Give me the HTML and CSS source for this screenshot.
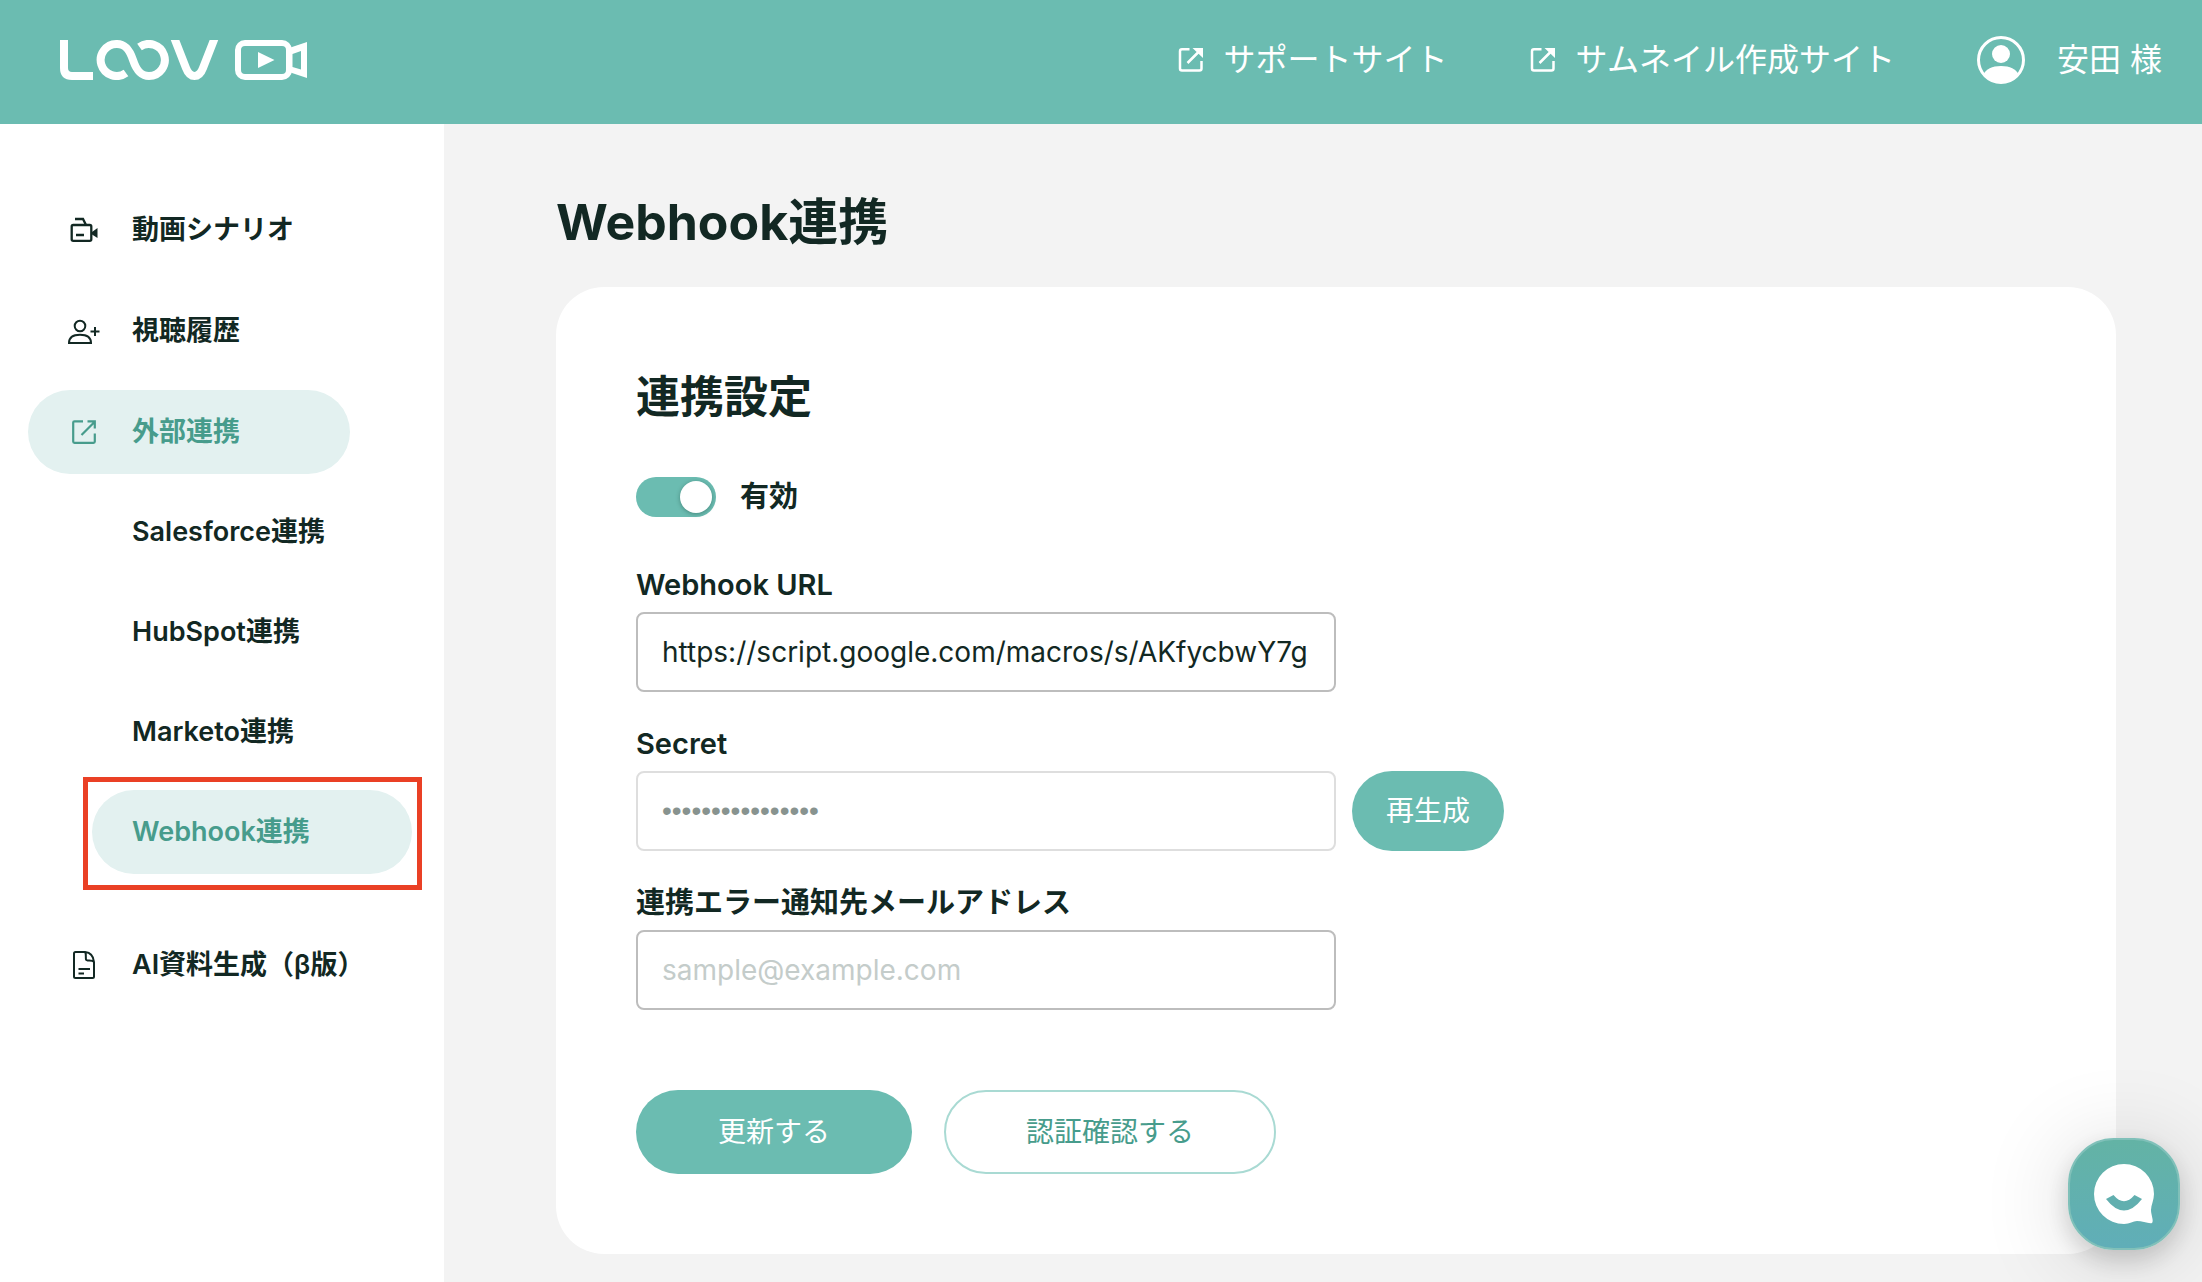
FILE: index.html
```html
<!DOCTYPE html>
<html lang="ja">
<head>
<meta charset="utf-8">
<meta name="viewport" content="width=device-width, initial-scale=1">
<title>Webhook連携 | LOOV</title>
<link rel="stylesheet" href="styles.css">
</head>
<body>
<header class="header">
  <a class="logo" href="#" aria-label="LOOV">
    <svg width="248" height="40" viewBox="60 40 248 40" fill="none" stroke="#fff" stroke-width="8">
      <path d="M64 36V68Q64 76 72 76H93"/>
      <path d="M126 73A16 16 0 1 1 117 44C126 44 130 51 133 60C136 69 140 76 149 76A16 16 0 1 0 139.500 47"/>
      <path d="M173.500 36L186 68Q189 76 194.500 76Q200 76 203 68L215.500 36"/>
      <rect x="238" y="43" width="51" height="34" rx="7" stroke-width="6"/>
      <path d="M258 52L274.500 60L258 68Z" fill="#fff" stroke="none"/>
      <path fill-rule="evenodd" d="M289 48L307 42V78L289 72ZM292.500 54V67L301 69.500V51Z" fill="#fff" stroke="none"/>
    </svg>
  </a>
  <nav class="header-nav">
    <a class="header-link" href="#">
      <svg class="header-icon" viewBox="0 0 26 26" fill="none" stroke="#fff" stroke-width="2.500"><path d="M11.500 2.300H4a2 2 0 0 0-2 2V21.500a2 2 0 0 0 2 2H21.500a2 2 0 0 0 2-2V14M9.500 16L21 4.500"/><path d="M14.500 1H25V11Z" fill="#fff" stroke="none"/></svg>
      <span>サポートサイト</span>
    </a>
    <a class="header-link" href="#">
      <svg class="header-icon" viewBox="0 0 26 26" fill="none" stroke="#fff" stroke-width="2.500"><path d="M11.500 2.300H4a2 2 0 0 0-2 2V21.500a2 2 0 0 0 2 2H21.500a2 2 0 0 0 2-2V14M9.500 16L21 4.500"/><path d="M14.500 1H25V11Z" fill="#fff" stroke="none"/></svg>
      <span>サムネイル作成サイト</span>
    </a>
    <a class="account" href="#">
      <svg width="48" height="48" viewBox="0 0 48 48"><circle cx="24" cy="24" r="22.500" fill="none" stroke="#fff" stroke-width="3"/><circle cx="24" cy="18" r="9" fill="#fff"/><path d="M6 39C9 33 15 30 24 30S39 33 42 39A24 24 0 0 1 6 39Z" fill="#fff"/></svg>
      <span>安田 様</span>
    </a>
  </nav>
</header>
<div class="layout">
  <nav class="sidebar">
    <ul class="menu">
      <li><a class="menu-item" href="#">
        <svg class="menu-icon" viewBox="0 0 32 32" fill="none" stroke="currentColor" stroke-width="2.300"><rect x="3.700" y="11" width="19.600" height="15.800" rx="1.500"/><path d="M7 5H15L18 11M8 21H16"/><path d="M24 18L29.500 14V24L24 20.500Z" fill="currentColor" stroke="none"/></svg>
        動画シナリオ</a></li>
      <li><a class="menu-item" href="#">
        <svg class="menu-icon" viewBox="0 0 32 32" fill="none" stroke="currentColor" stroke-width="2"><circle cx="12" cy="11" r="5.300"/><path d="M1 28C1 22 5 19.700 12 19.700S23 22 23 28ZM27 12V21M22.500 16.500H31.500"/></svg>
        視聴履歴</a></li>
      <li>
        <a class="menu-item menu-item-active" href="#">
          <svg class="menu-icon" viewBox="0 0 32 32" fill="none" stroke="currentColor" stroke-width="2.200"><path d="M15 5.300H6.500a1.300 1.300 0 0 0-1.300 1.300V25.600a1.300 1.300 0 0 0 1.300 1.300H25.500a1.300 1.300 0 0 0 1.300-1.300V17.500M13.500 19L26.500 6M19.500 5.300H26.800V12.600"/></svg>
          外部連携</a>
        <ul class="submenu">
          <li><a class="submenu-item" href="#">Salesforce連携</a></li>
          <li><a class="submenu-item" href="#">HubSpot連携</a></li>
          <li><a class="submenu-item" href="#">Marketo連携</a></li>
          <li class="submenu-marked"><a class="submenu-item menu-item-active" href="#">Webhook連携</a></li>
        </ul>
      </li>
      <li class="menu-last"><a class="menu-item" href="#">
        <svg class="menu-icon" viewBox="0 0 32 32" fill="none" stroke="currentColor" stroke-width="2"><path d="M7.500 3H17C22 3.500 25.500 7 26 13V27.500a1.500 1.500 0 0 1-1.500 1.500H7.500A1.500 1.500 0 0 1 6 27.500V4.500A1.500 1.500 0 0 1 7.500 3ZM17 3C18.500 5 17.500 8.500 18 10.500C18.500 12.500 24 10.500 26 13M10.500 20H22M10.500 24.500H16"/></svg>
        AI資料生成（β版）</a></li>
    </ul>
  </nav>
  <main class="main">
    <h1 class="page-title">Webhook連携</h1>
    <form class="card">
      <h2 class="card-title">連携設定</h2>
      <label class="toggle"><input class="toggle-input" type="checkbox" role="switch" checked>有効</label>
      <div class="field">
        <label class="label" for="url">Webhook URL</label>
        <input class="input" id="url" type="text" value="https://script.google.com/macros/s/AKfycbwY7g">
      </div>
      <div class="field">
        <label class="label" for="secret">Secret</label>
        <div class="field-row">
          <input class="input input-secret" id="secret" type="password" value="abcdefghijklmnop" disabled>
          <button class="button button-small" type="button">再生成</button>
        </div>
      </div>
      <div class="field">
        <label class="label" for="mail">連携エラー通知先メールアドレス</label>
        <input class="input" id="mail" type="email" placeholder="sample@example.com">
      </div>
      <div class="actions">
        <button class="button" type="button">更新する</button>
        <button class="button button-outline" type="button">認証確認する</button>
      </div>
    </form>
  </main>
</div>
<button class="chat" type="button" aria-label="チャット">
  <svg width="60" height="60" viewBox="0 0 60 60"><path d="M30 0A30 30 0 0 1 60 30C60 36 57 41 57 46C57 51 60 57 58 59C55 60 48 57 43 57C39 57 36 60 30 60A30 30 0 0 1 30 0Z" fill="#fff"/><path d="M12 35L19.500 31Q30 43.500 40.500 31L48 35Q30 58 12 35Z" fill="#61afaf"/></svg>
</button>
</body>
</html>
```
FILE: styles.css
```css
* { box-sizing: border-box; }

body {
  margin: 0;
  min-height: 100vh;
  display: flex;
  flex-direction: column;
  background: #f3f3f3;
  color: #122823;
  font-family: Inter, "Noto Sans CJK JP", sans-serif;
  font-size: 28px;
  line-height: 42px;
}

h1, h2, ul { margin: 0; padding: 0; }
ul { list-style: none; }
a { color: inherit; text-decoration: none; }
svg { display: block; flex: none; }
button, input { font: inherit; color: inherit; }

.header {
  height: 124px;
  padding: 0 40px 4px 60px;
  display: flex;
  align-items: center;
  justify-content: space-between;
  background: #6bbcb1;
  color: #fff;
  font-size: 32px;
  white-space: nowrap;
}
.header-nav { display: flex; align-items: center; gap: 82px; }
.header-link { display: flex; align-items: center; gap: 20px; }
.header-icon { width: 26px; height: 26px; }
.account { display: flex; align-items: center; gap: 32px; }

.layout { flex: 1; display: flex; }

.sidebar {
  flex: none;
  width: 444px;
  padding: 64px 28px 40px;
  background: #fff;
  font-size: 27px;
  font-weight: 600;
  white-space: nowrap;
}
.menu { display: flex; flex-direction: column; gap: 17px; }
.menu-item, .submenu-item {
  display: flex;
  align-items: center;
  height: 84px;
  padding-left: 40px;
  border-radius: 42px;
}
.menu-item { width: 322px; gap: 32px; }
.menu-icon { width: 32px; height: 32px; }
.menu-item-active { background: #e3f1f0; color: #479c8c; }
.menu-last { margin-top: 32px; }
.submenu {
  display: flex;
  flex-direction: column;
  gap: 16px;
  margin: 16px 0 0 64px;
}
.submenu-item { width: 320px; }
.submenu-marked { position: relative; }
.submenu-marked::after {
  content: "";
  position: absolute;
  inset: -13px -10px -16px -9px;
  border: 5px solid #ea4025;
  pointer-events: none;
}
.submenu-marked { width: 320px; }

.main { flex: 1; min-width: 0; padding: 62px 86px 28px 112px; }
.page-title {
  margin-bottom: 29px;
  font-size: 50px;
  line-height: 72px;
  font-weight: 700;
}
.card { padding: 80px; border-radius: 48px; background: #fff; }
.card-title { margin-bottom: 50px; font-size: 44px; line-height: 60px; font-weight: 700; }

.toggle {
  display: flex;
  align-items: center;
  gap: 24px;
  height: 40px;
  margin-bottom: 47px;
  font-size: 29px;
  font-weight: 600;
}
.toggle-input {
  appearance: none;
  display: flex;
  justify-content: flex-end;
  width: 80px;
  height: 40px;
  margin: 0;
  padding: 4px;
  border-radius: 20px;
  background: #6bbcb1;
}
.toggle-input::before {
  content: "";
  width: 32px;
  height: 32px;
  border-radius: 50%;
  background: #fff;
  box-shadow: 0 1px 4px rgba(0, 40, 30, .35);
}
.toggle-input:not(:checked) { justify-content: flex-start; background: #bdbdbd; }

.field { display: flex; flex-direction: column; gap: 6px; margin-bottom: 31px; }
.field-row { display: flex; gap: 16px; }
.label { font-size: 29px; font-weight: 600; }
.input {
  width: 700px;
  max-width: 100%;
  height: 80px;
  padding: 0 24px;
  border: 2px solid #bdbdbd;
  border-radius: 8px;
  background: #fff;
}
.input::placeholder { color: #c4ccca; opacity: 1; }
.input-secret { border-color: #dedede; color: #88938f; font-family: "Liberation Sans", sans-serif; }

.actions { display: flex; gap: 32px; margin-top: 80px; }
.actions .button { height: 84px; }
.button {
  padding: 0 82px;
  border: 0;
  border-radius: 42px;
  background: #6bbcb1;
  color: #fff;
  white-space: nowrap;
}
.button-small { padding: 0 34px; }
.button-outline { border: 2px solid #a9dad3; padding: 0 80px; background: #fff; color: #479c8c; }

.chat {
  position: fixed;
  right: 22px;
  bottom: 32px;
  width: 112px;
  height: 112px;
  display: grid;
  place-items: center;
  padding: 0;
  border: 2px solid #80c0b9;
  border-radius: 46px;
  background: linear-gradient(#63b3a5, #60aeb8);
  box-shadow: 0 10px 24px rgba(0, 0, 0, .16), 0 8px 90px rgba(0, 0, 0, .16);
}
```
